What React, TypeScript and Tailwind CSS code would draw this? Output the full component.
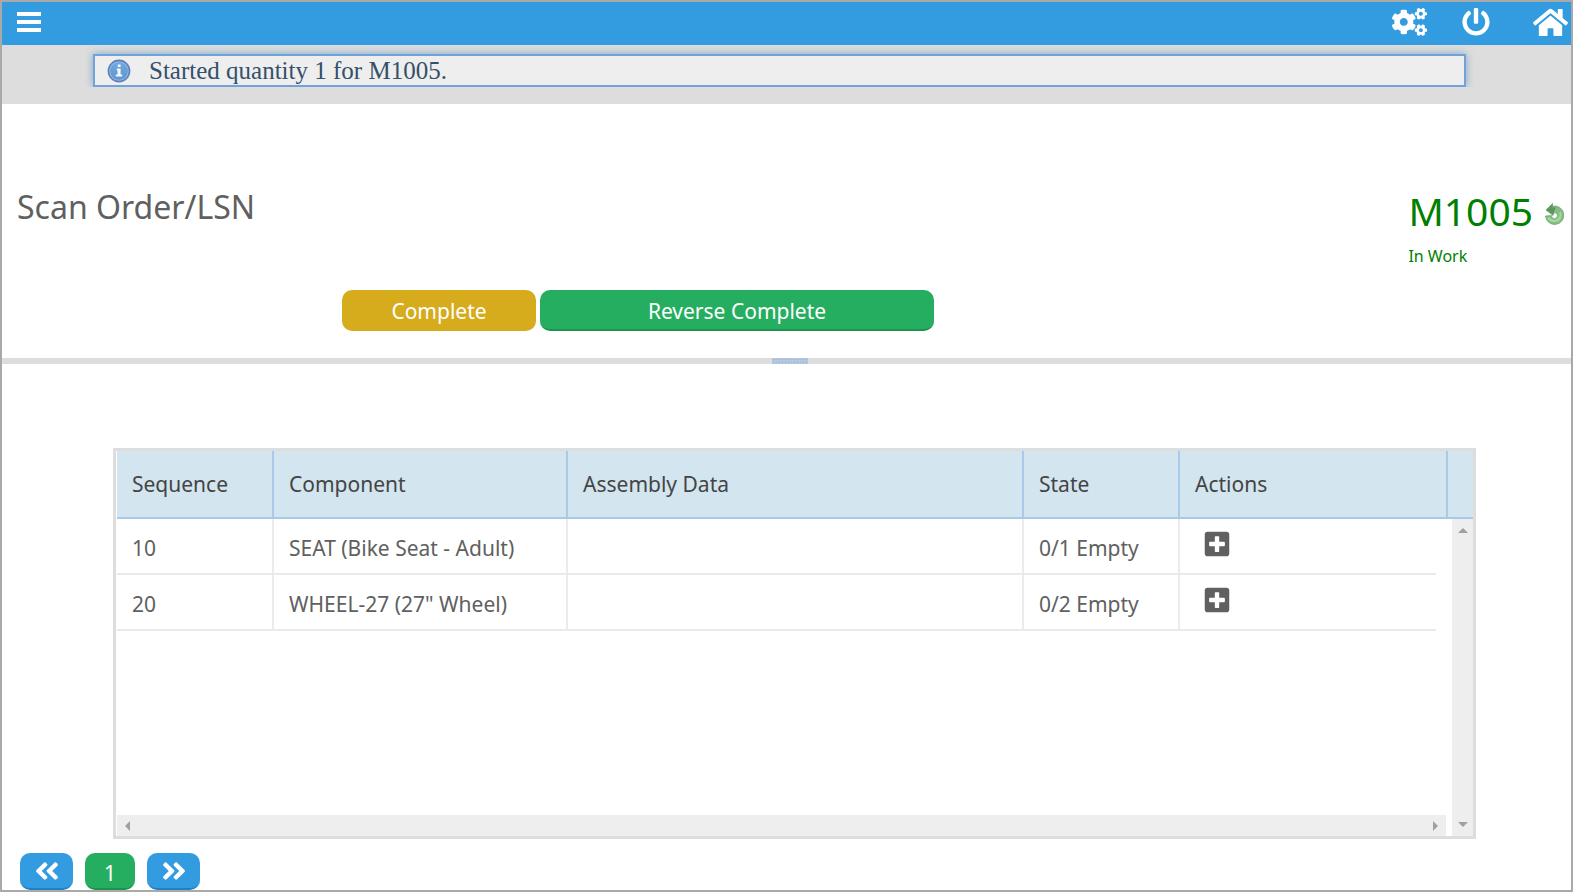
import { FaAngleDoubleLeft, FaAngleDoubleRight, FaCogs, FaHome, FaPlusSquare, FaPowerOff } from "react-icons/fa";

type Row = { sequence: string; component: string; data: string; state: string };

const rows: Row[] = [
  { sequence: "10", component: "SEAT (Bike Seat - Adult)", data: "", state: "0/1 Empty" },
  { sequence: "20", component: 'WHEEL-27 (27" Wheel)', data: "", state: "0/2 Empty" },
];

function TopBar() {
  return (
    <header className="flex h-[43px] items-center justify-between bg-[#339ce0] pr-[3px] pb-[3px] pl-[15px] text-white">
      <button type="button" aria-label="Menu" className="flex w-6 flex-col gap-1">
        <span className="h-1 bg-white" />
        <span className="h-1 bg-white" />
        <span className="h-1 bg-white" />
      </button>
      <nav aria-label="Main" className="flex items-center">
        <button type="button" aria-label="Settings" className="mr-[35px]">
          <FaCogs className="h-7 w-[35px]" />
        </button>
        <button type="button" aria-label="Log out" className="mr-[43px]">
          <FaPowerOff className="size-7" />
        </button>
        <a href="#home" aria-label="Home">
          <FaHome className="size-[35px]" />
        </a>
      </nav>
    </header>
  );
}

function InfoIcon() {
  return (
    <svg viewBox="0 0 24 24" className="size-6 shrink-0" aria-hidden="true">
      <defs>
        <linearGradient id="info-fill" x1="0" y1="0" x2="0" y2="1">
          <stop offset="0" stopColor="#6fa9dc" />
          <stop offset="1" stopColor="#5f96d0" />
        </linearGradient>
      </defs>
      <circle cx="12" cy="12" r="11.400" fill="#5f80bb" />
      <circle cx="12" cy="12" r="9.800" fill="#8fbbe2" />
      <circle cx="12" cy="12" r="8.800" fill="url(#info-fill)" />
      <path d="M10.800 5.500h2.800v2.600h-2.800zM9.800 9.600h3.800v6h1.600v2H8.800v-2h1.800v-4.200h-.8z" fill="#f4f8fd" />
    </svg>
  );
}

function UndoIcon() {
  return (
    <svg viewBox="0 0 19 22" className="h-[22px] w-[19px]" aria-hidden="true">
      <path
        d="M1 7 7.500.5v2.800A9.200 9.200 0 1 1 .5 13l6-.4a3 3 0 1 0 2.500-2.900L8 12.500z"
        fill="#86bd84"
        stroke="#6aa56b"
        strokeWidth="0.8"
      />
      <path d="M15 9c2 4-.6 8.600-5 9-3 .3-5-1-6.800-3.200" fill="none" stroke="#a9d6a0" strokeWidth="2.200" />
      <path d="M1.300 7 7.300 1.200v3l3.500.3L8 11.500z" fill="#5b9560" />
    </svg>
  );
}

const th = "border-r-2 border-b-2 border-[#a9c9e8] px-[15px] text-left align-middle font-normal";
const td = "border-r-2 border-b-2 border-r-[#ebebeb] border-b-[#e6ebeb] px-[15px] pt-1";

function Columns() {
  return (
    <colgroup>
      <col className="w-[157px]" />
      <col className="w-[294px]" />
      <col />
      <col className="w-[156px]" />
      <col className="w-[268px]" />
    </colgroup>
  );
}

function Arrow({ points }: { points: string }) {
  return (
    <svg viewBox="0 0 10 10" className="size-[10px]" aria-hidden="true">
      <polygon points={points} fill="#a0a0a0" />
    </svg>
  );
}

function AssemblyTable() {
  return (
    <section className="mt-[84px] mr-[95px] ml-[111px] flex h-[391px] flex-col border-[3px] border-[#dddddd] pl-px">
      <div className="flex min-h-0 flex-1">
        <div className="flex min-w-0 flex-1 flex-col">
          <table className="w-full table-fixed border-separate border-spacing-0 text-[21px] leading-7 text-[#606060]">
            <Columns />
            <thead className="bg-[#d3e5ef] text-[#444444]">
              <tr className="h-[68px]">
                {["Sequence", "Component", "Assembly Data", "State", "Actions"].map((name) => (
                  <th key={name} scope="col" className={th}>
                    {name}
                  </th>
                ))}
              </tr>
            </thead>
            <tbody>
              {rows.map((row) => (
                <tr key={row.sequence} className="h-14">
                  <td className={td}>{row.sequence}</td>
                  <td className={td}>{row.component}</td>
                  <td className={td}>{row.data}</td>
                  <td className={td}>{row.state}</td>
                  <td className="p-0 pr-3">
                    <div className="flex h-14 items-center border-b-2 border-[#e6ebeb] pb-1 pl-[23px]">
                      <button type="button" aria-label={`Add to sequence ${row.sequence}`}>
                        <FaPlusSquare className="size-7" />
                      </button>
                    </div>
                  </td>
                </tr>
              ))}
            </tbody>
          </table>
          <div className="mt-auto mr-0.5 flex h-[21px] items-center justify-between bg-[#eeeeee] px-[6px]">
            <Arrow points="7,0 7,10 2,5" />
            <Arrow points="3,0 3,10 8,5" />
          </div>
        </div>
        <div className="flex w-[25px] flex-col">
          <div className="h-[68px] border-b-2 border-[#a9c9e8] bg-[#d3e5ef]" />
          <div className="ml-1 flex flex-1 flex-col items-center justify-between bg-[#eeeeee] py-[6px]">
            <Arrow points="0,8 10,8 5,3" />
            <Arrow points="0,2 10,2 5,7" />
          </div>
        </div>
      </div>
    </section>
  );
}

export default function App() {
  return (
    <div className="flex min-h-screen flex-col border-2 border-[#a9a9a9] bg-white font-['Noto_Sans',sans-serif] text-[#606060]">
      <TopBar />
      <div className="h-[59px] bg-[#dddddd] pr-[97px] pl-[83px]">
        <div className="h-[42px] overflow-hidden px-2 pt-[9px]">
          <div
            role="status"
            className="flex h-[33px] items-center gap-[18px] border-2 border-[#6fa3d9] bg-[#eeeeee] pl-3 font-['Liberation_Serif',serif] text-[25px] text-[#34506a] shadow-[0_0_8px_#7fa8cc]"
          >
            <InfoIcon />
            Started quantity 1 for M1005.
          </div>
        </div>
      </div>
      <main className="flex flex-1 flex-col">
        <section className="flex h-[254px] flex-col justify-between pb-[27px]">
          <div className="flex justify-between pt-[79px] pr-[7px] pl-[15px]">
            <h1 className="pt-1 text-[32px] leading-[40px]">Scan Order/LSN</h1>
            <div className="text-[#008000]">
              <div className="flex items-center gap-3">
                <span className="text-[39px] leading-[56px]">M1005</span>
                <button type="button" aria-label="Undo" className="pt-[6px]">
                  <UndoIcon />
                </button>
              </div>
              <p className="text-base leading-[34px]">In Work</p>
            </div>
          </div>
          <div className="flex gap-1 pl-[340px] text-[21px] text-white">
            <button type="button" className="h-[41px] w-[194px] rounded-[10px] bg-[#d6ab1c] pt-[3px]">
              Complete
            </button>
            <button type="button" className="h-[41px] w-[394px] rounded-[10px] border-b-2 border-[#1c9450] bg-[#25ae60] pt-[5px]">
              Reverse Complete
            </button>
          </div>
        </section>
        <div className="flex h-[6px] justify-center bg-[#dddddd] pl-[6px]">
          <div className="w-9 bg-[radial-gradient(#a9c1da_1px,#d3dae2_2px)] bg-size-[3px_3px]" />
        </div>
        <AssemblyTable />
        <nav aria-label="Pages" className="mt-auto flex gap-3 pl-[18px] text-[21px] text-white">
          <button type="button" aria-label="Previous" className="flex h-[37px] w-[53px] items-center justify-center rounded-[10px] border-b-2 border-[#2080c4] bg-[#339ce0]">
            <FaAngleDoubleLeft className="size-7" />
          </button>
          <button type="button" className="h-[37px] w-[50px] rounded-[10px] border-b-2 border-[#1c9450] bg-[#25ae60] pt-[5px]">
            1
          </button>
          <button type="button" aria-label="Next" className="flex h-[37px] w-[53px] items-center justify-center rounded-[10px] border-b-2 border-[#2080c4] bg-[#339ce0]">
            <FaAngleDoubleRight className="size-7" />
          </button>
        </nav>
      </main>
    </div>
  );
}
